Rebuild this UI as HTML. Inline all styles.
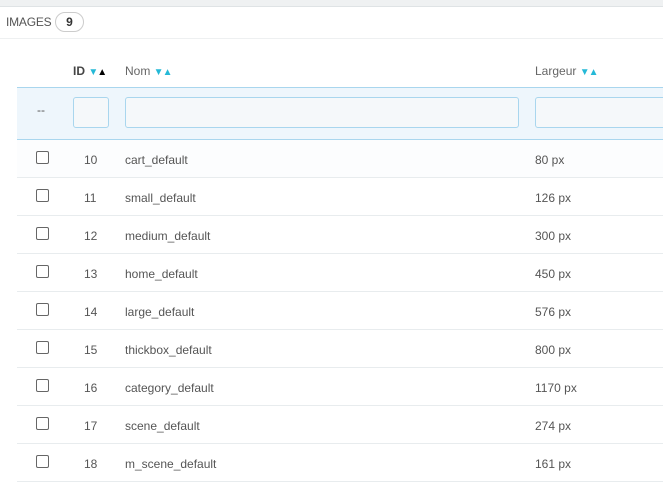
<!DOCTYPE html>
<html><head><style>
body{margin:0;width:663px;height:498px;overflow:hidden;background:#fff;font-family:"Liberation Sans",sans-serif;color:#555;font-size:12px;position:relative}
.top{position:absolute;left:0;top:0;width:663px;height:6px;background:#eff1f2;border-bottom:1px solid #dfe3e5}
.h{position:absolute;left:6px;top:15px;font-size:12px;color:#555;letter-spacing:-0.2px}
.badge{position:absolute;left:55px;top:12px;width:27px;height:18px;border:1px solid #ccc;border-radius:10px;text-align:center;line-height:18px;font-weight:bold;color:#333;font-size:12px}
.hl{position:absolute;left:0;top:38px;width:663px;height:1px;background:#eef0f1}
.th{position:absolute;top:64px;font-size:12px;color:#666}
.ar{color:#25b9d7;font-size:10px;letter-spacing:-1px}
.filter{position:absolute;left:17px;top:87px;width:646px;height:51px;background:#eef6fc;border-top:1px solid #a9d6ee;border-bottom:1px solid #a9d6ee}
.in{position:absolute;top:9px;height:31px;background:#f5f8fa;border:1px solid #a9d6ee;border-radius:3px;box-sizing:border-box}
.row{position:absolute;left:17px;width:646px;height:37px;border-bottom:1px solid #e8ecee;background:#fff}
.row span{position:absolute;top:13px}
.cb{position:absolute;left:19px;top:11px;width:11px;height:11px;border:1px solid #666;border-radius:2px;background:#fff}
</style></head><body>
<div class="top"></div>
<div class="h">IMAGES</div><div class="badge">9</div>
<div class="hl"></div>
<div class="th" style="left:73px;font-weight:bold;color:#444">ID <span class="ar">▼</span><span style="font-size:10px;color:#000">▲</span></div>
<div class="th" style="left:125px">Nom <span class="ar">▼▲</span></div>
<div class="th" style="left:535px">Largeur <span class="ar">▼▲</span></div>
<div class="filter">
<span style="position:absolute;left:20px;top:15px">--</span>
<div class="in" style="left:56px;width:36px"></div>
<div class="in" style="left:108px;width:394px"></div>
<div class="in" style="left:518px;width:140px"></div>
</div>
<div class="row" style="top:140px;background:#fcfdfe"><div class="cb"></div><span style="left:67px">10</span><span style="left:108px">cart_default</span><span style="left:518px">80 px</span></div>
<div class="row" style="top:178px"><div class="cb"></div><span style="left:67px">11</span><span style="left:108px">small_default</span><span style="left:518px">126 px</span></div>
<div class="row" style="top:216px"><div class="cb"></div><span style="left:67px">12</span><span style="left:108px">medium_default</span><span style="left:518px">300 px</span></div>
<div class="row" style="top:254px"><div class="cb"></div><span style="left:67px">13</span><span style="left:108px">home_default</span><span style="left:518px">450 px</span></div>
<div class="row" style="top:292px"><div class="cb"></div><span style="left:67px">14</span><span style="left:108px">large_default</span><span style="left:518px">576 px</span></div>
<div class="row" style="top:330px"><div class="cb"></div><span style="left:67px">15</span><span style="left:108px">thickbox_default</span><span style="left:518px">800 px</span></div>
<div class="row" style="top:368px"><div class="cb"></div><span style="left:67px">16</span><span style="left:108px">category_default</span><span style="left:518px">1170 px</span></div>
<div class="row" style="top:406px"><div class="cb"></div><span style="left:67px">17</span><span style="left:108px">scene_default</span><span style="left:518px">274 px</span></div>
<div class="row" style="top:444px"><div class="cb"></div><span style="left:67px">18</span><span style="left:108px">m_scene_default</span><span style="left:518px">161 px</span></div>
</body></html>
